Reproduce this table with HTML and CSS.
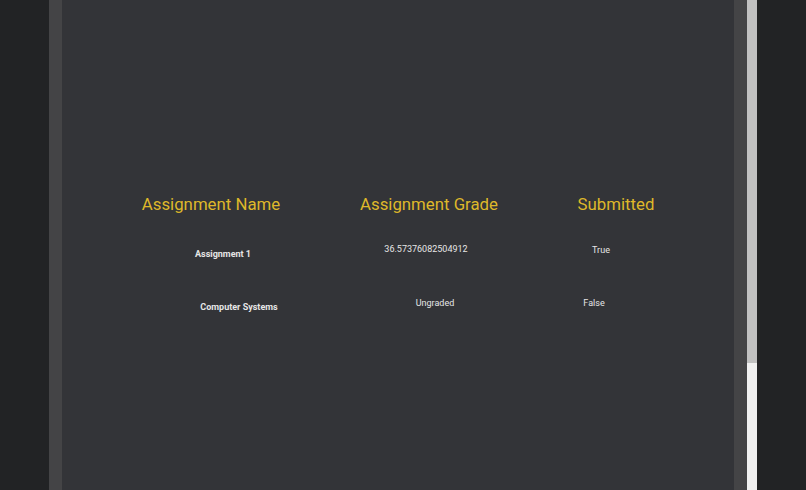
FILE: index.html
```html
<!DOCTYPE html>
<html>
<head>
<meta charset="utf-8">
<link rel="stylesheet" href="styles.css">
</head>
<body>
<div class="page">
  <div class="gutter"></div>
  <div class="panel">
    <div class="strip"></div>
    <main class="content">
      <div class="table">
        <div class="row head">
          <div class="cell">Assignment Name</div>
          <div class="cell">Assignment Grade</div>
          <div class="cell">Submitted</div>
        </div>
        <div class="row r1">
          <div class="cell name n1">Assignment 1</div>
          <div class="cell g1">36.57376082504912</div>
          <div class="cell s1">True</div>
        </div>
        <div class="row r2">
          <div class="cell name n2">Computer Systems</div>
          <div class="cell g2">Ungraded</div>
          <div class="cell s2">False</div>
        </div>
      </div>
    </main>
    <div class="strip"></div>
    <div class="scrollbar"><div class="thumb"></div></div>
  </div>
  <div class="gutter"></div>
</div>
</body>
</html>
```
FILE: styles.css
```css
html, body {
  margin: 0;
  height: 100%;
  background: #222325;
  font-family: Roboto, "Liberation Sans", sans-serif;
  overflow: hidden;
}
.page {
  display: flex;
  height: 490px;
}
.gutter {
  width: 49px;
  background: #222325;
}
.page .gutter:last-child {
  flex: 1;
}
.panel {
  display: flex;
  width: 708px;
}
.strip {
  width: 13px;
  background: #444446;
}
.content {
  flex: 1;
  background: #333438;
  padding-top: 193px;
}
.scrollbar {
  width: 10px;
  background: #f1f1f1;
  display: flex;
  flex-direction: column;
}
.thumb {
  height: 363px;
  background: #c1c1c1;
}
.row {
  display: grid;
  grid-template-columns: 298px 138px 236px;
}
.cell {
  text-align: center;
  white-space: nowrap;
}
.head .cell {
  color: #dfb82a;
  font-size: 16.8px;
  line-height: 22px;
}
.r1, .r2 {
  font-size: 9px;
  color: #e6e6e6;
  line-height: 12px;
}
.r1 { margin-top: 28px; }
.r2 { margin-top: 37px; }
.name { font-weight: bold; }
.n1 { padding-left: 24px; padding-top: 5px; }
.g1 { padding-right: 6px; }
.s1 { padding-right: 30px; padding-top: 1px; }
.n2 { padding-left: 56px; padding-top: 4px; }
.g2 { padding-left: 12px; }
.s2 { padding-right: 44px; }
```
